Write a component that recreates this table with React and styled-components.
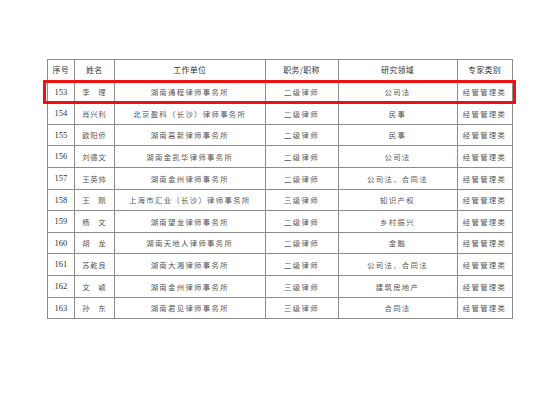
import React from "react";
import styled, { createGlobalStyle } from "styled-components";

const GlobalStyle = createGlobalStyle`
  html, body {
    margin: 0;
    padding: 0;
    background: #ffffff;
  }
`;

const Page = styled.div`
  width: 560px;
  height: 395px;
  box-sizing: border-box;
  padding: 59px 0 0 47px;
  background: #fff;
`;

const TableWrap = styled.div`
  position: relative;
  width: 465px;
`;

const Table = styled.table`
  width: 465px;
  border-collapse: collapse;
  table-layout: fixed;
  font-family: "Noto Sans CJK SC", "Liberation Serif", serif;
  line-height: 1;
`;

const Th = styled.th`
  height: 20.6px;
  padding: 0;
  border: 1px solid #8c8c8c;
  font-size: 8px;
  font-weight: 400;
  color: #333;
  text-align: center;
  letter-spacing: 0.3px;
`;

const Td = styled.td`
  height: 20.6px;
  padding: 0;
  border: 1px solid #8c8c8c;
  font-size: 7.4px;
  color: #555;
  text-align: center;
  letter-spacing: ${(p) => (p.$wide ? "1.3px" : "0.6px")};
  white-space: nowrap;
  overflow: hidden;
`;

const Num = styled(Td)`
  font-family: "Liberation Serif", serif;
  font-size: 8.5px;
  color: #333;
  letter-spacing: 0;
`;

const Highlight = styled.div`
  position: absolute;
  left: -4.5px;
  top: 20.5px;
  width: 473px;
  height: 24px;
  box-sizing: border-box;
  border: 3px solid #ee1111;
  pointer-events: none;
`;

const rows = [
  ["153", "李　理", "湖南通程律师事务所", "二级律师", "公司法"],
  ["154", "肖兴利", "北京盈科（长沙）律师事务所", "二级律师", "民事"],
  ["155", "欧阳侨", "湖南高新律师事务所", "二级律师", "民事"],
  ["156", "刘德文", "湖南金凯华律师事务所", "二级律师", "公司法"],
  ["157", "王英帅", "湖南金州律师事务所", "二级律师", "公司法、合同法"],
  ["158", "王　刚", "上海市汇业（长沙）律师事务所", "三级律师", "知识产权"],
  ["159", "杨　文", "湖南望龙律师事务所", "二级律师", "乡村振兴"],
  ["160", "胡　龙", "湖南天地人律师事务所", "二级律师", "金融"],
  ["161", "苏乾良", "湖南大湘律师事务所", "二级律师", "公司法、合同法"],
  ["162", "文　颖", "湖南金州律师事务所", "三级律师", "建筑房地产"],
  ["163", "孙　东", "湖南君见律师事务所", "三级律师", "合同法"],
];

export default function App() {
  return (
    <Page>
      <GlobalStyle />
      <TableWrap>
        <Table>
          <colgroup>
            <col style={{ width: 26.5 }} />
            <col style={{ width: 40.5 }} />
            <col style={{ width: 150.5 }} />
            <col style={{ width: 73 }} />
            <col style={{ width: 119 }} />
            <col style={{ width: 55 }} />
          </colgroup>
          <thead>
            <tr>
              <Th>序号</Th>
              <Th>姓名</Th>
              <Th>工作单位</Th>
              <Th>职务/职称</Th>
              <Th>研究领域</Th>
              <Th>专家类别</Th>
            </tr>
          </thead>
          <tbody>
            {rows.map((r) => (
              <tr key={r[0]}>
                <Num>{r[0]}</Num>
                <Td>{r[1]}</Td>
                <Td $wide>{r[2]}</Td>
                <Td $wide>{r[3]}</Td>
                <Td $wide>{r[4]}</Td>
                <Td $wide>经管管理类</Td>
              </tr>
            ))}
          </tbody>
        </Table>
        <Highlight />
      </TableWrap>
    </Page>
  );
}
